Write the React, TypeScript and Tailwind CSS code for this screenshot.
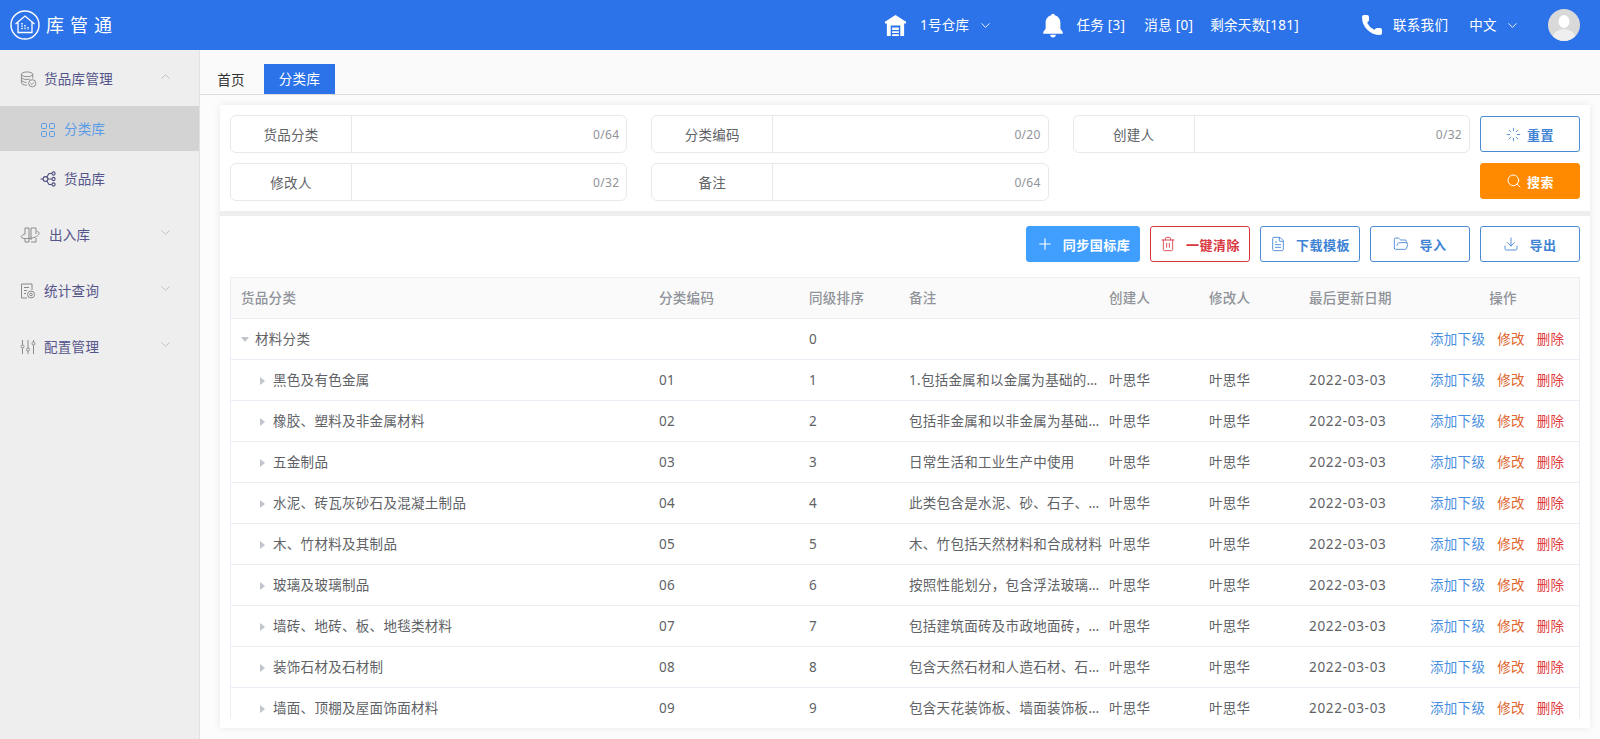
import { ChevronDown, ChevronUp, Download, FileText, FolderOpen, Loader, Phone, Plus, Search, Trash2 } from 'lucide-react';

const rows = [
  { name: '黑色及有色金属', code: '01', sort: 1, note: '1.包括金属和以金属为基础的…' },
  { name: '橡胶、塑料及非金属材料', code: '02', sort: 2, note: '包括非金属和以非金属为基础…' },
  { name: '五金制品', code: '03', sort: 3, note: '日常生活和工业生产中使用' },
  { name: '水泥、砖瓦灰砂石及混凝土制品', code: '04', sort: 4, note: '此类包含是水泥、砂、石子、…' },
  { name: '木、竹材料及其制品', code: '05', sort: 5, note: '木、竹包括天然材料和合成材料' },
  { name: '玻璃及玻璃制品', code: '06', sort: 6, note: '按照性能划分，包含浮法玻璃…' },
  { name: '墙砖、地砖、板、地毯类材料', code: '07', sort: 7, note: '包括建筑面砖及市政地面砖，…' },
  { name: '装饰石材及石材制', code: '08', sort: 8, note: '包含天然石材和人造石材、石…' },
  { name: '墙面、顶棚及屋面饰面材料', code: '09', sort: 9, note: '包含天花装饰板、墙面装饰板…' },
];

const Logo = () => (
  <svg viewBox="0 0 30 30" className="w-[30px] h-[30px]" fill="none" stroke="white">
    <circle cx="15" cy="15" r="14" strokeWidth="1.4" />
    <path d="M5.5 14 15 6l9.5 8M8 12v10.5h14V12" strokeWidth="1.3" />
    <path d="M12 13v7M15 15v5M18 17v3" strokeWidth="1.5" strokeDasharray="1.4 1" />
  </svg>
);

const Warehouse = () => (
  <svg viewBox="0 0 24 24" className="w-[23px] h-[23px]" fill="white">
    <path d="M12 1 1 8v2h2v13h4V12h10v11h4V10h2V8z" />
    <path d="M8.5 14h7v2.6h-7zM8.5 18h7v1.8h-7zM8.5 21h7v2h-7z" />
  </svg>
);

const Bell = () => (
  <svg viewBox="0 0 24 24" className="w-[26px] h-[26px]" fill="white">
    <path d="M12 1.5c-1 0-1.6.7-1.7 1.6C7 4 5.2 6.8 5.2 10v5.5L3 18.5V20h18v-1.5l-2.2-3V10c0-3.2-1.8-6-5.1-6.9-.1-.9-.7-1.6-1.7-1.6z" />
    <path d="M9.5 21h5a2.5 2.5 0 0 1-5 0z" />
  </svg>
);

const Avatar = () => (
  <svg viewBox="0 0 32 32" className="w-8 h-8 rounded-full">
    <rect width="32" height="32" fill="#d9d9d9" />
    <ellipse cx="16" cy="12.5" rx="5.5" ry="6.5" fill="white" />
    <ellipse cx="16" cy="29" rx="11.5" ry="9" fill="#efefef" />
  </svg>
);

const DbIcon = () => (
  <svg viewBox="0 0 18 18" className="w-[17px] h-[17px]" fill="none" stroke="#8a8a8a" strokeWidth="1">
    <ellipse cx="7.5" cy="3.5" rx="6" ry="2.5" />
    <path d="M1.5 3.5v9c0 1.4 2.5 2.5 6 2.5M13.5 3.5V8M1.5 6.5c0 1.4 2.7 2.5 6 2.5 1.2 0 2.4-.2 3.3-.5M1.5 9.5c0 1.4 2.5 2.5 5.5 2.5" />
    <circle cx="13" cy="13" r="3.8" />
    <path d="m11.2 13 1.4 1.3 2.2-2.3" />
  </svg>
);

const GridIcon = () => (
  <svg viewBox="0 0 14 14" className="w-[14px] h-[14px]" fill="none" stroke="#5a9be8" strokeWidth="1">
    <rect x="0.5" y="0.5" width="5" height="5" rx="1" />
    <rect x="8.5" y="0.5" width="5" height="5" rx="1" />
    <rect x="0.5" y="8.5" width="5" height="5" rx="1" />
    <rect x="8.5" y="8.5" width="5" height="5" rx="1" />
  </svg>
);

const NodesIcon = () => (
  <svg viewBox="0 0 16 16" className="w-4 h-4" fill="none" stroke="#4c4c7e" strokeWidth="1.1">
    <circle cx="13.5" cy="2.5" r="1.6" />
    <circle cx="13.5" cy="8" r="1.6" />
    <circle cx="13.5" cy="13.5" r="1.6" />
    <circle cx="5.5" cy="8" r="2.4" />
    <path d="M0.5 8h2.6M7.9 8h4M6.8 6 9 2.5h2.9M6.8 10 9 13.5h2.9" />
  </svg>
);

const InOutIcon = () => (
  <svg viewBox="0 0 20 18" className="w-5 h-[18px]" fill="none" stroke="#8a8a8a" strokeWidth="1">
    <path d="M5 8V2h4v14H5v-3M11 14V2h5v6M11 16h5v-4" />
    <path d="M5 8c-3 1-4.500 2.500-3.500 3.500S7 13 12 12s7-3 7-5c0-1-1-1.500-2-1.500" />
  </svg>
);

const ReportIcon = () => (
  <svg viewBox="0 0 16 16" className="w-4 h-4" fill="none" stroke="#8a8a8a" strokeWidth="1">
    <path d="M7 15H1.500V1H12v6" />
    <path d="M4 4.500h5M4 7.500h3M4 10.500h2" />
    <circle cx="11" cy="11.500" r="3.500" />
    <circle cx="11" cy="11.500" r="1.300" />
  </svg>
);

const SlidersIcon = () => (
  <svg viewBox="0 0 16 16" className="w-4 h-4" fill="none" stroke="#8a8a8a" strokeWidth="1">
    <path d="M2.500 1v5M2.500 9v6M8 1v8M8 12v3M13.500 1v2M13.500 6v9" />
    <circle cx="2.500" cy="7.500" r="1.500" />
    <circle cx="8" cy="10.500" r="1.500" />
    <circle cx="13.500" cy="4.500" r="1.500" />
  </svg>
);

const MenuGroup = ({ icon, label, open, gap }: { icon: React.ReactNode; label: string; open?: boolean; gap: string }) => (
  <div className={`h-[56px] flex items-center pl-5 pr-[26px] text-[#55558a] ${open ? 'pt-[2px]' : ''}`}>
    <span className={`flex items-center ${gap}`}>
      {icon}
      {label}
    </span>
    {open ? (
      <ChevronUp className="ml-auto w-[15px] h-[15px] text-[#b5b5b5] -translate-y-[3px]" strokeWidth={1.3} />
    ) : (
      <ChevronDown className="ml-auto w-[15px] h-[15px] text-[#b5b5b5] -translate-y-[3px]" strokeWidth={1.3} />
    )}
  </div>
);

const Sidebar = () => (
  <aside className="w-[200px] shrink-0 bg-[#eeeeee] border-r border-[#e2e2e2] text-[13.5px]">
    <MenuGroup icon={<DbIcon />} label="货品库管理" open gap="gap-[7px]" />
    <div className="h-[45px] bg-[#d3d3d3] flex items-center pl-[41px] pt-[2px] gap-[9px] text-[#5a9be8]">
      <GridIcon />
      分类库
    </div>
    <div className="h-[56px] flex items-center pl-[40px] gap-[8px] text-[#55558a]">
      <NodesIcon />
      货品库
    </div>
    <MenuGroup icon={<InOutIcon />} label="出入库" gap="gap-[9px]" />
    <MenuGroup icon={<ReportIcon />} label="统计查询" gap="gap-[8px]" />
    <MenuGroup icon={<SlidersIcon />} label="配置管理" gap="gap-[8px]" />
  </aside>
);

const Field = ({ label, max }: { label: string; max: number }) => (
  <div className="h-[38px] flex border border-[#e9e9e9] rounded-md text-[13.5px] text-[#606266]">
    <div className="w-[121px] shrink-0 border-r border-[#e9e9e9] flex items-center justify-center pt-[2px]">{label}</div>
    <div className="flex-1 flex items-center justify-end pr-[7px] pt-[2px] text-[12px] text-[#909399] tracking-[0.3px]">0/{max}</div>
  </div>
);

const ToolButton = ({ icon, label, className }: { icon: React.ReactNode; label: string; className: string }) => (
  <button className={`h-9 rounded-[3px] border flex items-center justify-center font-semibold text-[13px] tracking-[0.5px] ${className}`}>
    {icon}
    <span className="pt-[3px]">{label}</span>
  </button>
);

export default function App() {
  const blueOutline = 'w-[100px] border-[#4a8bd6] text-[#3f83d4] bg-white';

  return (
    <div className="h-[739px] overflow-hidden flex flex-col bg-white tracking-[0.3px] font-['Noto_Sans','Noto_Sans_CJK_SC',sans-serif]">
      <header className="h-[50px] shrink-0 bg-[#2c73ea] flex items-center text-white text-[13.5px]">
        <div className="flex items-center pl-[10px] gap-[6px]">
          <Logo />
          <span className="text-[18px] tracking-[6px]">库管通</span>
        </div>
        <div className="ml-[766px] flex items-center">
          <Warehouse />
          <span className="ml-[13px]">1号仓库</span>
          <ChevronDown className="ml-[9px] w-[15px] h-[15px]" strokeWidth={1.4} />
        </div>
        <div className="ml-[47px] flex items-center">
          <Bell />
          <span className="ml-[10px]">任务 [3]</span>
          <span className="ml-[19px]">消息 [0]</span>
          <span className="ml-[17px]">剩余天数[181]</span>
        </div>
        <div className="ml-[61px] flex items-center">
          <Phone className="w-6 h-6" fill="white" strokeWidth={0} />
          <span className="ml-[9px]">联系我们</span>
          <span className="ml-[21px]">中文</span>
          <ChevronDown className="ml-2 w-[15px] h-[15px]" strokeWidth={1.4} />
        </div>
        <div className="ml-auto pr-5">
          <Avatar />
        </div>
      </header>

      <div className="flex-1 flex min-h-0">
        <Sidebar />
        <main className="flex-1 min-w-0 flex flex-col bg-[#fcfcfc]">
          <div className="h-[45px] shrink-0 bg-[#fafafa] border-b border-[#dcdcdc] flex items-end text-[13.5px]">
            <div className="w-[64px] h-[30px] flex items-center justify-center pr-[2px] pt-[2px] text-[#333]">首页</div>
            <div className="w-[71px] h-[30px] flex items-center justify-center text-white bg-[#2c73ea]">分类库</div>
          </div>

          <div className="ml-5 mr-[10px] mt-[10px] bg-[#eeeeee] shadow-[0_0_8px_rgba(0,0,0,0.08)]">
            <section className="h-[106px] bg-white pl-[10px] pr-[10px] pt-[10px] flex">
              <div className="w-[1240px] grid grid-cols-3 gap-x-[24px] gap-y-[10px] content-start">
                <Field label="货品分类" max={64} />
                <Field label="分类编码" max={20} />
                <Field label="创建人" max={32} />
                <Field label="修改人" max={32} />
                <Field label="备注" max={64} />
              </div>
              <div className="ml-auto mt-px flex flex-col gap-[11px]">
                <ToolButton className={blueOutline} icon={<Loader className="w-[15px] h-[15px] mr-[6px]" strokeWidth={1.3} />} label="重置" />
                <ToolButton className="w-[100px] border-[#ff8a00] bg-[#ff8a00] text-white" icon={<Search className="w-4 h-4 mr-[5px]" strokeWidth={1.5} />} label="搜索" />
              </div>
            </section>

            <section className="mt-[5px] h-[512px] bg-white px-[10px] pt-[10px]">
              <div className="flex justify-end gap-[10px]">
                <ToolButton className="w-[114px] border-[#409eff] bg-[#409eff] text-white" icon={<Plus className="w-[18px] h-[18px] mr-[9px]" strokeWidth={1.5} />} label="同步国标库" />
                <ToolButton className="w-[100px] border-[#d9363e] text-[#d9363e] bg-white" icon={<Trash2 className="w-4 h-4 mr-[10px]" strokeWidth={1.3} />} label="一键清除" />
                <ToolButton className={blueOutline} icon={<FileText className="w-4 h-4 mr-[10px]" strokeWidth={1.3} />} label="下载模板" />
                <ToolButton className={blueOutline} icon={<FolderOpen className="w-4 h-4 mr-[10px]" strokeWidth={1.3} />} label="导入" />
                <ToolButton className={blueOutline} icon={<Download className="w-4 h-4 mr-[10px]" strokeWidth={1.3} />} label="导出" />
              </div>

              <div className="mt-[15px] h-[441px] overflow-hidden border-t border-x border-[#ebeef5]">
                <table className="w-full table-fixed border-collapse text-[13.5px] text-[#606266]">
                  <colgroup>
                    <col className="w-[418px]" />
                    <col className="w-[150px]" />
                    <col className="w-[100px]" />
                    <col className="w-[200px]" />
                    <col className="w-[100px]" />
                    <col className="w-[100px]" />
                    <col className="w-[120px]" />
                    <col />
                  </colgroup>
                  <thead>
                    <tr className="h-[40px] bg-[#fafafa] text-[#909399] text-left border-b border-[#ebeef5]">
                      <th className="pl-[10px] font-medium">货品分类</th>
                      <th className="pl-[10px] font-medium">分类编码</th>
                      <th className="pl-[10px] font-medium">同级排序</th>
                      <th className="pl-[10px] font-medium">备注</th>
                      <th className="pl-[10px] font-medium">创建人</th>
                      <th className="pl-[10px] font-medium">修改人</th>
                      <th className="pl-[10px] font-medium">最后更新日期</th>
                      <th className="pl-2 font-medium text-center">操作</th>
                    </tr>
                  </thead>
                  <tbody className="[&_td]:pt-[2px]">
                    <tr className="h-[41px] border-b border-[#ebeef5]">
                      <td className="pl-[10px]">
                        <div className="flex items-center gap-[6px]">
                          <span className="w-0 h-0 border-x-[4px] border-x-transparent border-t-[5px] border-t-[#c0c4cc]" />
                          <span>材料分类</span>
                        </div>
                      </td>
                      <td />
                      <td className="pl-[10px]">0</td>
                      <td />
                      <td />
                      <td />
                      <td />
                      <Actions />
                    </tr>
                    {rows.map((row) => (
                      <tr key={row.code} className="h-[41px] border-b border-[#ebeef5]">
                        <td className="pl-[29px]">
                          <div className="flex items-center gap-[8px]">
                            <span className="w-0 h-0 border-y-[4px] border-y-transparent border-l-[5px] border-l-[#c0c4cc]" />
                            <span>{row.name}</span>
                          </div>
                        </td>
                        <td className="pl-[10px]">{row.code}</td>
                        <td className="pl-[10px]">{row.sort}</td>
                        <td className="pl-[10px] whitespace-nowrap">{row.note}</td>
                        <td className="pl-[10px]">叶思华</td>
                        <td className="pl-[10px]">叶思华</td>
                        <td className="pl-[10px] tracking-[0.7px]">2022-03-03</td>
                        <Actions />
                      </tr>
                    ))}
                  </tbody>
                </table>
              </div>
            </section>
          </div>
        </main>
      </div>
    </div>
  );
}

function Actions() {
  return (
    <td className="pl-[11px] whitespace-nowrap">
      <span className="text-[#4a90e2]">添加下级</span>
      <span className="ml-3 text-[#e0662d]">修改</span>
      <span className="ml-3 text-[#e03c3c]">删除</span>
    </td>
  );
}
